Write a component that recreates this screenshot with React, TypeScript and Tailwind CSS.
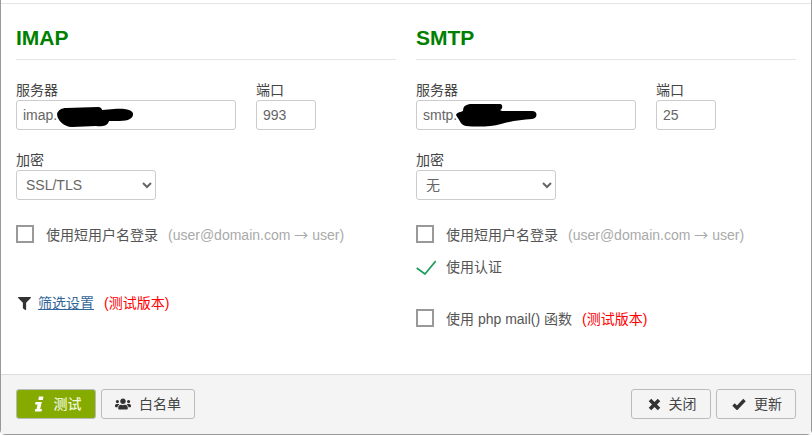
import type { ReactNode } from "react";
import { FaFilter, FaUsers } from "react-icons/fa";

const font = { fontFamily: '"Liberation Sans", "Noto Sans CJK SC", sans-serif' };

function Box() {
  return <span className="size-[18px] shrink-0 border-2 border-[#999]" />;
}

function Beta() {
  return <span className="ml-[10px] text-[#f00]">(测试版本)</span>;
}

function Scribble({path}: {path: string}) {
  return (
    <svg className="absolute left-0 top-0" width="220" height="30" viewBox="0 0 220 30">
      <path d={path} fill="#000" />
    </svg>
  );
}

function ShortLogin() {
  return (
    <div className="mt-[25px] flex h-[18px] items-center text-[14px] text-[#555]">
      <Box />
      <span className="ml-3 mt-[2px]">使用短用户名登录</span>
      <span className="ml-[10px] mt-[2px] text-[#aaa]">(user@domain.com <span className="font-['Noto_Sans_CJK_SC']">→</span> user)</span>
    </div>
  );
}

function ServerFields({prefix, port, scribble, encryption}: {prefix: string; port: string; scribble: string; encryption: string}) {
  return (
    <>
      <div className="mt-[20px] flex gap-5">
        <div>
          <div className="h-[20px] text-[14px] leading-[20px] text-[#444]">服务器</div>
          <div className="relative">
            <div className="h-[30px] w-[220px] rounded-[3px] border border-[#ccc] px-[6px] text-[14px] leading-[28px] text-[#666]">{prefix}</div>
            <Scribble path={scribble} />
          </div>
        </div>
        <div>
          <div className="h-[20px] text-[14px] leading-[20px] text-[#444]">端口</div>
          <div className="h-[30px] w-[60px] rounded-[3px] border border-[#ccc] px-[6px] text-[14px] leading-[28px] text-[#666]">{port}</div>
        </div>
      </div>
      <div className="mt-[20px] h-[20px] text-[14px] leading-[20px] text-[#444]">加密</div>
      <select style={font} defaultValue={encryption} className="block h-[30px] w-[140px] rounded-[3px] border border-[#ccc] bg-white px-[5px] text-[14px] text-[#666]">
        <option>{encryption}</option>
      </select>
    </>
  );
}

function Button({icon, label, className}: {icon: ReactNode; label: string; className?: string}) {
  return (
    <button type="button" style={font} className={`flex h-[30px] items-center justify-center rounded-[3px] border border-[#bbb] text-[14px] text-[#444] ${className ?? ""}`}>
      {icon}
      {label}
    </button>
  );
}

export default function App() {
  return (
    <div style={font} className="h-[436px] w-[812px] overflow-hidden bg-white">
      <div className="flex h-[435px] flex-col rounded-br-[5px] rounded-bl-[5px] border-x border-b border-[#999]">
        <div className="mt-[3px] flex flex-1 gap-5 border-t border-[#e5e5e5] px-[15px]">
          <section className="w-[380px]">
            <h3 className="mt-[20px] h-[36px] border-b border-[#e5e5e5] text-[21px] font-bold leading-[28px] text-[#008000]">IMAP</h3>
            <ServerFields prefix="imap." port="993" encryption="SSL/TLS" scribble="M41 14 C42 10 46 8 50 8 L82 7 C85 7 86 9 86 10 L98 9 C112 8 118 11 117 15 C116 20 110 21 100 21 L93 21 C92 26 85 27 80 26 L56 27 C48 27 41 20 41 14 Z" />
            <ShortLogin />
            <div className="mt-[50px] flex items-center text-[14px]">
              <FaFilter className="ml-[2px] size-[13px] text-[#333]" />
              <a className="ml-[7px] text-[#336699] underline">筛选设置</a>
              <Beta />
            </div>
          </section>
          <section className="w-[380px]">
            <h3 className="mt-[20px] h-[36px] border-b border-[#e5e5e5] text-[21px] font-bold leading-[28px] text-[#008000]">SMTP</h3>
            <ServerFields prefix="smtp." port="25" encryption="无" scribble="M40 15 C41 12 45 12 47 11 C47 6 50 4 56 4 L84 4 C87 4 87 9 84 10 L86 11 L116 11 C122 11 122 18 116 19 C105 20 95 21 85 24 C75 27 60 27 50 26 C45 25 44 21 40 15 Z" />
            <ShortLogin />
            <div className="mt-[15px] flex h-[18px] items-center text-[14px] text-[#555]">
              <svg className="shrink-0" width="20" height="16" viewBox="0 0 20 16">
                <path d="M0.7 9 L9 15 L19.7 2" fill="none" stroke="#1a9c5c" strokeWidth="1.7" />
              </svg>
              <span className="ml-[10px]">使用认证</span>
            </div>
            <div className="mt-[33px] flex h-[18px] items-center text-[14px] text-[#555]">
              <Box />
              <span className="ml-3 mt-[2px]">使用 php mail() 函数</span>
              <span className="mt-[2px] flex"><Beta /></span>
            </div>
          </section>
        </div>
        <div className="flex h-[60px] items-start justify-between border-t border-[#ddd] bg-[#f4f4f4] px-[15px] pt-[14px]">
          <div className="flex gap-[5px]">
            <Button
              className="w-[80px] border-[#6f8c00] bg-[#85aa00] pl-[3px] font-medium text-[#eef5d8]"
              label="测试"
              icon={
                <svg className="mr-[9px]" width="11" height="16" viewBox="0 0 11 16" fill="#fff">
                  <path d="M5 0.5 L9.5 0.5 L8.8 4 L4.3 4 Z" />
                  <path d="M1.5 6 L7.8 6 L6.2 13 L8 13 L7.5 15.5 L0.8 15.5 L1.3 13 L2.6 13 L3.5 8.5 L1 8.5 Z" />
                </svg>
              }
            />
            <Button className="w-[94px]" label="白名单" icon={<FaUsers className="mr-[8px] h-[14px] w-[16px] text-[#333]" />} />
          </div>
          <div className="flex gap-[5px]">
            <Button
              className="w-[80px] pl-[2px]"
              label="关闭"
              icon={
                <svg className="mr-[8px]" width="13" height="13" viewBox="0 0 13 13">
                  <path d="M2 2 L11 11 M11 2 L2 11" fill="none" stroke="#333" strokeWidth="3.6" />
                </svg>
              }
            />
            <Button
              className="w-[80px] pl-[2px]"
              label="更新"
              icon={
                <svg className="mr-[8px]" width="14" height="12" viewBox="0 0 14 12">
                  <path d="M1.5 6.5 L5 10 L12.5 2" fill="none" stroke="#333" strokeWidth="3.4" />
                </svg>
              }
            />
          </div>
        </div>
      </div>
    </div>
  );
}
